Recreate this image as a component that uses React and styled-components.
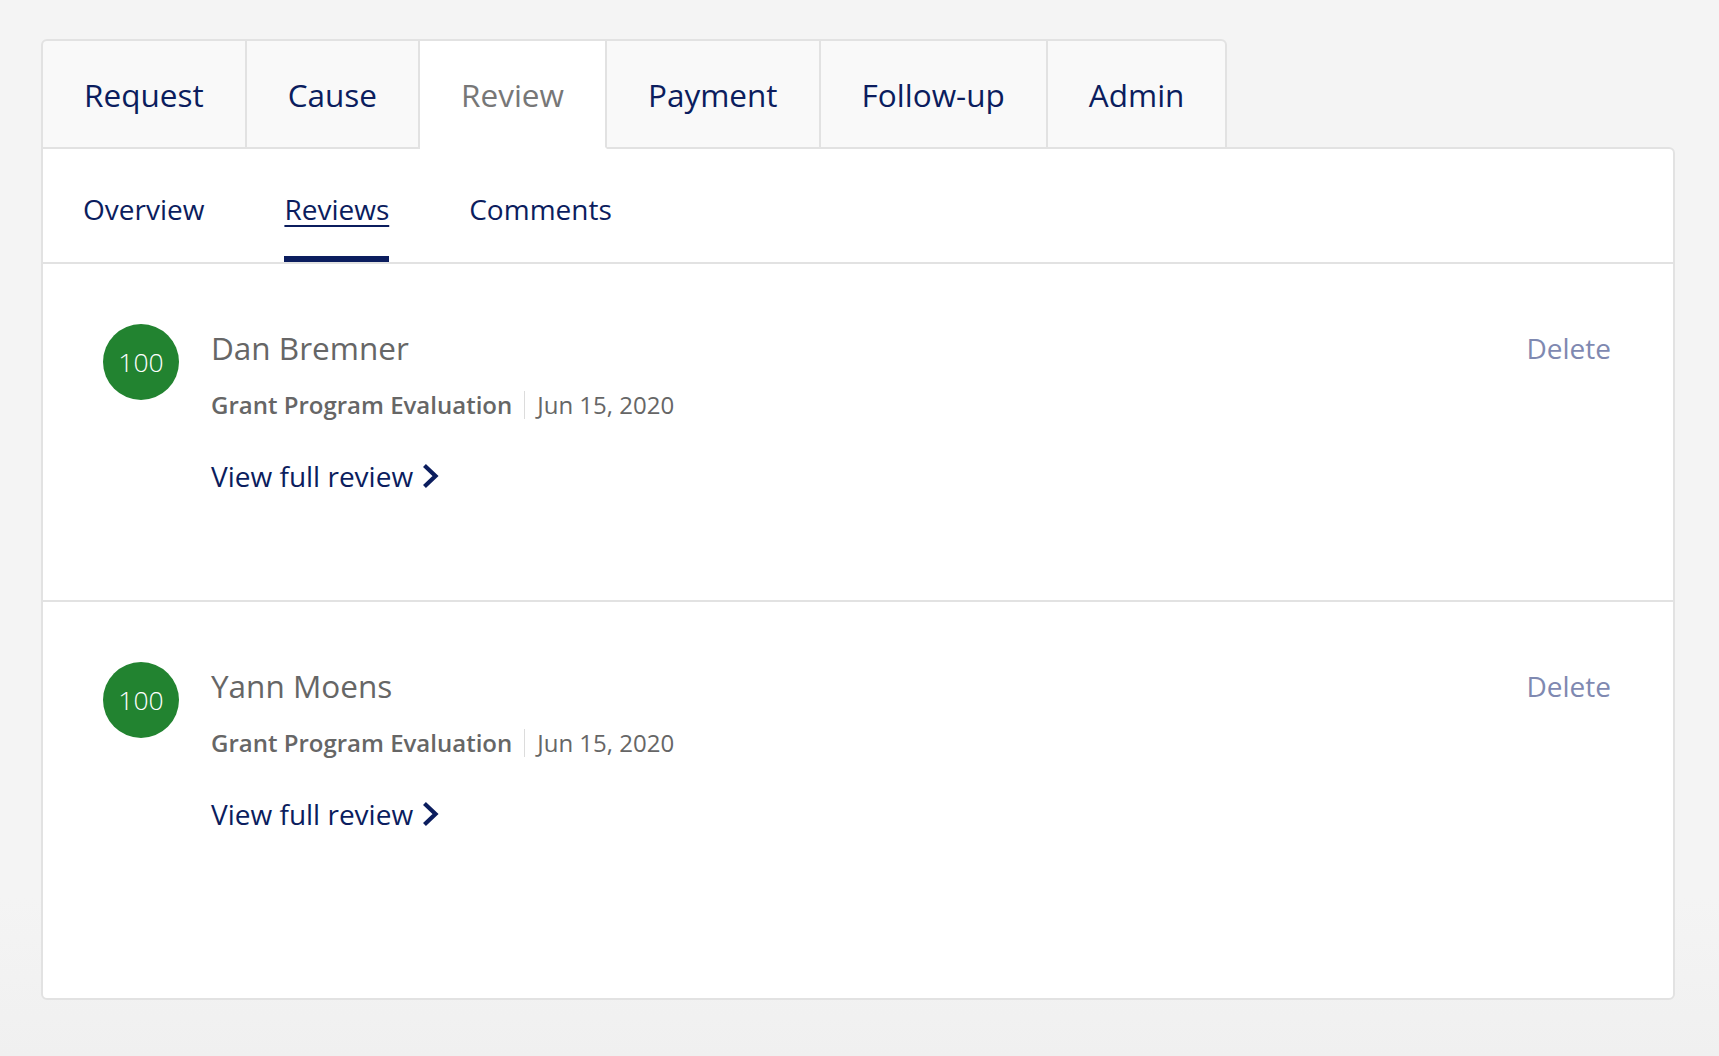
import React from "react";
import styled, { createGlobalStyle } from "styled-components";

const NAVY = "#0b1d5e";
const BORDER = "#e2e2e2";
const PAGE_BG = "#f4f4f4";

const tabs = ["Request", "Cause", "Review", "Payment", "Follow-up", "Admin"];
const subTabs = ["Overview", "Reviews", "Comments"];

const reviews = [
  { score: 100, name: "Dan Bremner", program: "Grant Program Evaluation", date: "Jun 15, 2020" },
  { score: 100, name: "Yann Moens", program: "Grant Program Evaluation", date: "Jun 15, 2020" },
];

const GlobalStyle = createGlobalStyle`
  html, body {
    margin: 0;
    background: ${PAGE_BG};
    font-family: "Open Sans", "Noto Sans", Arial, sans-serif;
  }
  * { box-sizing: border-box; }
`;

const Page = styled.div`
  min-height: 1056px;
  padding: 39px 0 56px 41px;
  background: linear-gradient(to bottom, ${PAGE_BG} 85%, #f0f0f0 100%);
`;

const Wrap = styled.div`
  width: 1634px;
`;

const TabBar = styled.div`
  display: flex;
  position: relative;
  z-index: 1;
  margin-bottom: -2px;
`;

const Tab = styled.div`
  height: 110px;
  padding: 0 41px;
  display: flex;
  align-items: center;
  font-size: 31.5px;
  color: ${(p) => (p.$active ? "#777" : NAVY)};
  background: ${(p) => (p.$active ? "#fff" : "#f9f9f9")};
  border: 2px solid ${BORDER};
  border-left: none;
  border-bottom-color: ${(p) => (p.$active ? "#fff" : BORDER)};

  &:first-child {
    border-left: 2px solid ${BORDER};
    border-top-left-radius: 6px;
  }
  &:last-child {
    border-top-right-radius: 6px;
  }
`;

const Card = styled.div`
  background: #fff;
  border: 2px solid ${BORDER};
  border-radius: 0 6px 6px 6px;
`;

const SubNav = styled.nav`
  display: flex;
  gap: 80px;
  height: 115px;
  padding-left: 40px;
  border-bottom: 2px solid ${BORDER};
`;

const SubTab = styled.a`
  display: flex;
  align-items: center;
  padding-top: 13px;
  font-size: 28px;
  color: ${NAVY};
  border-bottom: 6px solid ${(p) => (p.$active ? NAVY : "transparent")};
  text-decoration: ${(p) => (p.$active ? "underline" : "none")};
  text-decoration-thickness: 2px;
  text-underline-offset: 5px;
  cursor: pointer;
`;

const ReviewRow = styled.div`
  display: flex;
  align-items: flex-start;
  gap: 32px;
  padding: 60px 62px 104px 60px;
  border-bottom: 2px solid ${BORDER};

  &:last-child {
    border-bottom: none;
    padding-bottom: 164px;
  }
`;

const Score = styled.div`
  flex: none;
  width: 76px;
  height: 76px;
  border-radius: 50%;
  background: #228330;
  color: #fff;
  font-size: 26.5px;
  font-weight: 300;
  display: flex;
  align-items: center;
  justify-content: center;
`;

const Body = styled.div`
  flex: 1;
  display: flex;
  flex-direction: column;
  align-items: flex-start;
`;

const Name = styled.div`
  font-size: 31.5px;
  line-height: 47px;
  color: #666;
`;

const Meta = styled.div`
  display: flex;
  align-items: center;
  margin-top: 17px;
  font-size: 24px;
  line-height: 34px;
  color: #666;
`;

const Program = styled.span`
  font-weight: 600;
`;

const Sep = styled.span`
  width: 1px;
  height: 28px;
  margin: 0 12px;
  background: #dcdcdc;
`;

const ViewLink = styled.a`
  display: inline-flex;
  align-items: center;
  gap: 10px;
  margin-top: 34px;
  font-size: 28px;
  line-height: 40px;
  color: ${NAVY};
  cursor: pointer;
`;

const Delete = styled.a`
  font-size: 28px;
  line-height: 48px;
  color: #7f89b1;
  cursor: pointer;
`;

const Chevron = () => (
  <svg width="16" height="24" viewBox="0 0 16 24">
    <polyline
      points="3,3 12.5,12 3,21"
      fill="none"
      stroke={NAVY}
      strokeWidth="4.2"
      strokeLinecap="square"
    />
  </svg>
);

export default function App() {
  return (
    <Page>
      <GlobalStyle />
      <Wrap>
        <TabBar>
          {tabs.map((t) => (
            <Tab key={t} $active={t === "Review"}>
              {t}
            </Tab>
          ))}
        </TabBar>
        <Card>
          <SubNav>
            {subTabs.map((s) => (
              <SubTab key={s} $active={s === "Reviews"}>
                {s}
              </SubTab>
            ))}
          </SubNav>
          {reviews.map((r, i) => (
            <ReviewRow key={i}>
              <Score>{r.score}</Score>
              <Body>
                <Name>{r.name}</Name>
                <Meta>
                  <Program>{r.program}</Program>
                  <Sep />
                  <span>{r.date}</span>
                </Meta>
                <ViewLink>
                  View full review
                  <Chevron />
                </ViewLink>
              </Body>
              <Delete>Delete</Delete>
            </ReviewRow>
          ))}
        </Card>
      </Wrap>
    </Page>
  );
}
